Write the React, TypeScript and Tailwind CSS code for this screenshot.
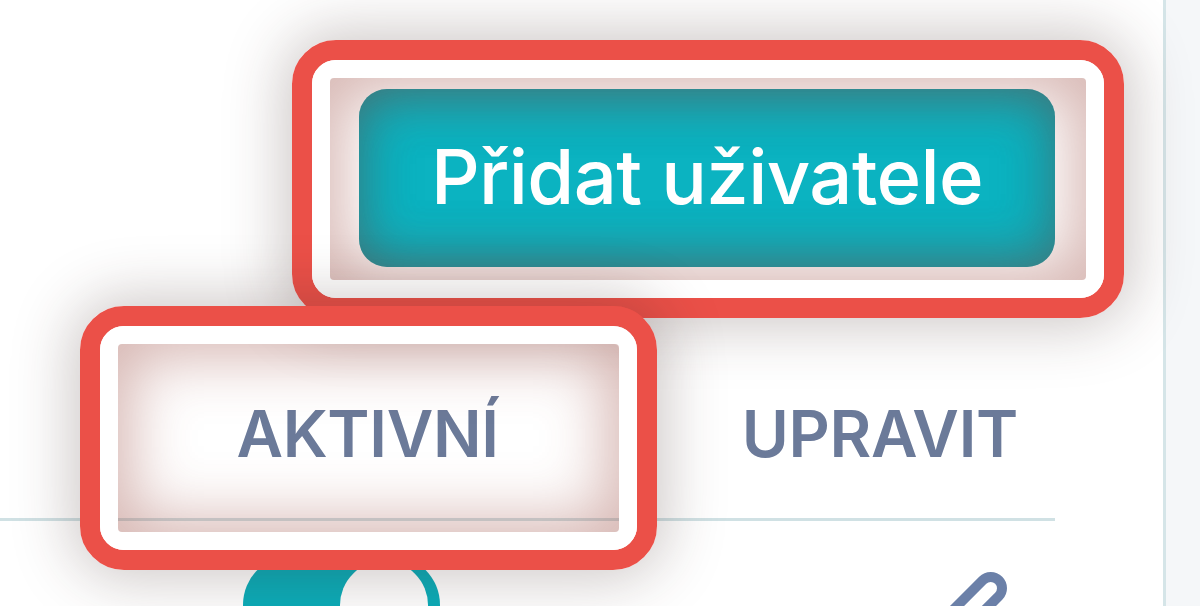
import React from 'react';
import { Pen } from 'lucide-react';

const Highlight: React.FC<{ className: string }> = ({ className }) => (
  <div className={`pointer-events-none absolute rounded-[44px] border-[20px] border-[#eb5048] shadow-[0_0_60px_8px_rgba(60,40,35,0.26)] ${className}`}>
    <div className="h-full w-full rounded-[24px] border-[18px] border-white">
      <div className="h-full w-full rounded-[4px] shadow-[inset_0_0_60px_14px_rgba(150,65,55,0.38)]" />
    </div>
  </div>
);

export default function App() {
  return (
    <div className="flex h-[606px] w-[1200px] overflow-hidden bg-[#f5f7f9] font-['Inter',sans-serif]">
      <main className="h-full w-[1166px] shrink-0 border-r-[3px] border-[#d5e5e8] bg-white">
        <div className="w-[1055px]">
          {/* Add user */}
          <div className="flex justify-end pt-[89px]">
            <div className="relative">
              <button className="flex h-[178px] w-[696px] items-center justify-center rounded-[28px] bg-[#0bb3c1] pb-[4px] text-[76px] font-medium tracking-[-0.6px] text-white shadow-[inset_0_0_50px_6px_rgba(50,110,115,0.55)]">
                Přidat uživatele
              </button>
              <Highlight className="-top-[49px] -bottom-[51px] -left-[67px] -right-[69px]" />
            </div>
          </div>

          {/* Table head */}
          <div className="relative flex h-[254px] items-end justify-end gap-[243px] border-b-[3px] border-[#d0e1e4] pb-[44px] pr-[37px] text-[64px] font-semibold leading-[80px] tracking-[-0.3px] text-[#6b7a99]">
            <span>AKTIVNÍ</span>
            <span>UPRAVIT</span>
            <Highlight className="left-[80px] top-[39px] h-[264px] w-[577px]" />
          </div>

          {/* First row */}
          <div className="flex items-start justify-between pt-[34px]">
            <div className="ml-[243px] flex h-[100px] w-[197px] items-center justify-end rounded-full bg-[#0badb9] pr-[12px]">
              <div className="h-[88px] w-[88px] rounded-full bg-white" />
            </div>
            <Pen size={96} strokeWidth={2.5} className="mr-[45px] mt-[14px] text-[#6b80a8]" />
          </div>
        </div>
      </main>
    </div>
  );
}
